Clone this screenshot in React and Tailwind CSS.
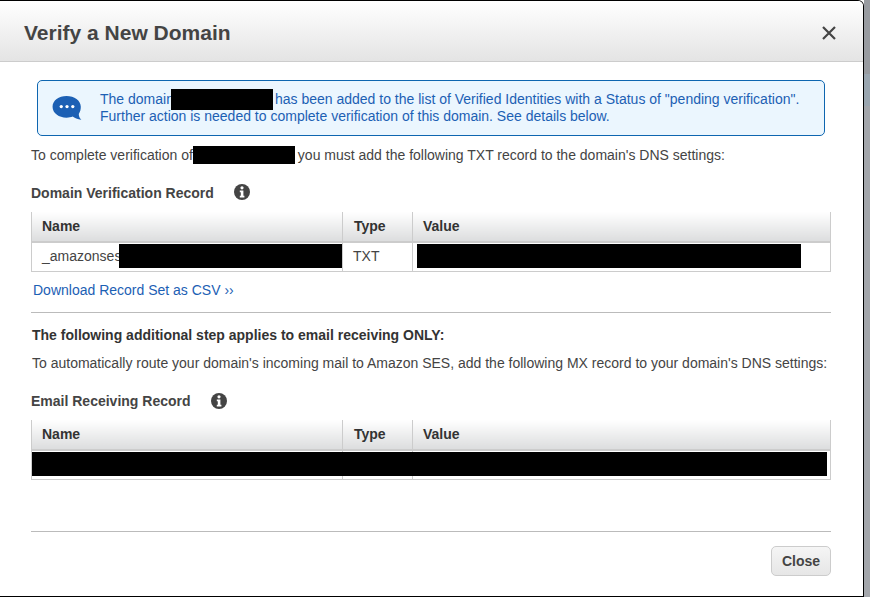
const Info = () => (
  <svg viewBox="0 0 16 16" className="w-4 h-4 shrink-0">
    <circle cx="8" cy="8" r="8" fill="#444" />
    <circle cx="8" cy="3.8" r="1.6" fill="#fff" />
    <path d="M5.8 6.6h3.6v5.2h1v1.6H5.8v-1.6h1V8.2h-1z" fill="#fff" />
  </svg>
);

const Redact = ({ className }) => <span className={"block bg-black " + className} />;

const headCell = "h-[30px] px-[10px] text-left font-bold text-[14px] text-[#333] border-b-2 border-b-[#ccc] border-r border-r-[#ccc] bg-gradient-to-b from-white to-[#dcddde]";

const RecordTable = ({ children }) => (
  <table className="w-[800px] table-fixed border-collapse border-l border-r border-b border-[#ccc]">
    <colgroup>
      <col className="w-[311px]" />
      <col className="w-[70px]" />
      <col />
    </colgroup>
    <thead>
      <tr>
        <th className={headCell}>Name</th>
        <th className={headCell + " pl-[11px]"}>Type</th>
        <th className={headCell + " border-r-0"}>Value</th>
      </tr>
    </thead>
    <tbody>{children}</tbody>
  </table>
);

export default function App() {
  return (
    <div className="flex h-[597px] w-[870px] overflow-hidden font-['Liberation_Sans',Arial,sans-serif] text-[14px] text-[#444]">
      <div className="h-[597px] w-[864px] border-y border-r border-black rounded-tr-md bg-white overflow-hidden">
        <div className="h-[61px] flex items-center justify-between pl-6 pr-[27px] pt-[4px] border-b border-[#ccc] bg-gradient-to-b from-white to-[#e4e4e4]">
          <h1 className="text-[21px] font-bold text-[#444]">Verify a New Domain</h1>
          <svg viewBox="0 0 14 14" className="w-[14px] h-[14px]">
            <path d="M1 1l12 12M13 1L1 13" stroke="#444" strokeWidth="2.2" />
          </svg>
        </div>

        <div className="pl-[31px] pr-[32px]">
          <div className="ml-[6px] mt-[18px] w-[788px] h-[56px] flex items-center border border-[#0e66b0] rounded-[5px] bg-[#ebf6fe] pl-[14px] text-[#1c60b4] leading-[17px]">
            <svg viewBox="0 0 32 28" className="w-[31px] h-[27px] shrink-0">
              <path d="M15 1C7 1 0.5 5.6 0.5 12.2S7 23.5 15 23.5c2.6 0 4.6-.4 6.4-1.1 1.800 1.500 5 3.200 9 3.200-1.800-1.500-2.600-3.600-2.700-6 1.400-2 2.100-4.500 2.100-7.400C29.800 5.600 23 1 15 1z" fill="#1c60b4" />
              <circle cx="9.500" cy="12" r="1.700" fill="#fff" />
              <circle cx="15.500" cy="12" r="1.700" fill="#fff" />
              <circle cx="21.500" cy="12" r="1.700" fill="#fff" />
            </svg>
            <div className="ml-[17px] whitespace-nowrap">
              <div className="flex items-center h-[17px]">
                The domain
                <Redact className="w-[102px] h-[21px] ml-[-3px] mr-[2px] relative z-10" />
                has been added to the list of Verified Identities with a Status of "pending verification".
              </div>
              <div>Further action is needed to complete verification of this domain. See details below.</div>
            </div>
          </div>

          <p className="mt-[10px] h-[18px] flex items-center whitespace-nowrap">
            To complete verification of
            <Redact className="w-[102px] h-[18px] mr-[3px]" />
            you must add the following TXT record to the domain's DNS settings:
          </p>

          <div className="mt-[20px] flex items-center h-[18px]">
            <h3 className="font-bold text-[14px] text-[#444]">Domain Verification Record</h3>
            <span className="ml-[20px] -mt-[2px]"><Info /></span>
          </div>

          <div className="mt-[10px]">
            <RecordTable>
              <tr className="h-[29px]">
                <td className="pl-[10px] pt-[1px] align-top border-r border-[#ccc] whitespace-nowrap overflow-hidden">
                  <div className="flex items-center">
                    _amazonses
                    <Redact className="h-[24px] grow ml-[-2px]" />
                  </div>
                </td>
                <td className="pl-[10px] pt-[1px] align-top leading-[24px] border-r border-[#ccc]">TXT</td>
                <td className="pl-[4px] pt-[1px] align-top">
                  <Redact className="w-[384px] h-[24px]" />
                </td>
              </tr>
            </RecordTable>
          </div>

          <a className="block mt-[9px] ml-[2px] h-[18px] leading-[18px] text-[#1c60b4]">Download Record Set as CSV ››</a>

          <div className="mt-[13px] w-[800px] border-t border-[#bbb]" />

          <p className="mt-[14px] ml-[1px] h-[17px] leading-[17px] font-bold text-[#333]">The following additional step applies to email receiving ONLY:</p>
          <p className="mt-[11px] ml-[1px] h-[17px] leading-[17px] whitespace-nowrap">To automatically route your domain's incoming mail to Amazon SES, add the following MX record to your domain's DNS settings:</p>

          <div className="mt-[21px] flex items-center h-[18px]">
            <h3 className="font-bold text-[14px] text-[#444]">Email Receiving Record</h3>
            <span className="ml-[20px] -mt-[2px]"><Info /></span>
          </div>

          <div className="mt-[9px]">
            <RecordTable>
              <tr className="h-[30px]">
                <td className="relative border-r border-[#ccc]">
                  <Redact className="absolute left-0 top-[1px] w-[795px] h-[24px]" />
                </td>
                <td className="border-r border-[#ccc]" />
                <td />
              </tr>
            </RecordTable>
          </div>

          <div className="mt-[51px] w-[800px] border-t border-[#bbb]" />

          <div className="mt-[14px] w-[800px] flex justify-end">
            <button className="w-[60px] h-[30px] rounded-[5px] border border-[#ccc] bg-gradient-to-b from-[#f5f5f5] to-[#e6e6e6] font-bold text-[14px] text-[#444]">Close</button>
          </div>
        </div>
      </div>
      <div className="w-[6px] flex flex-col">
        <div className="h-[74px] bg-[#989ba0]" />
        <div className="h-[32px] bg-[#9aa6b0]" />
        <div className="grow bg-[#a3a6ab]" />
      </div>
    </div>
  );
}
